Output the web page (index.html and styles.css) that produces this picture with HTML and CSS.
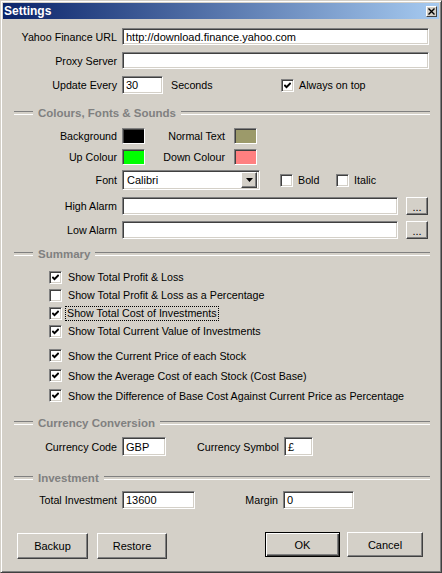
FILE: index.html
```html
<!DOCTYPE html>
<html>
<head>
<meta charset="utf-8">
<title>Settings</title>
<link rel="stylesheet" href="styles.css">
</head>
<body>
<div class="window">
  <div class="titlebar">
    <span class="title">Settings</span>
    <span class="close"><svg width="7" height="7" viewBox="0 0 7 7"><path d="M0.5 0.5 L6.5 6.5 M6.5 0.5 L0.5 6.5" stroke="#000" stroke-width="1.4" fill="none"/></svg></span>
  </div>
  <div class="content">
    <div class="row r-url"><span class="lbl">Yahoo Finance URL</span><div class="field w-url">http://download.finance.yahoo.com</div></div>
    <div class="row r-proxy"><span class="lbl">Proxy Server</span><div class="field w-url"></div></div>
    <div class="row r-update">
      <span class="lbl">Update Every</span><div class="field w-update">30</div>
      <span class="seconds">Seconds</span>
      <span class="check"><span class="cb"><svg width="7" height="7" viewBox="0 0 7 7"><polyline points="0.3,3 2.5,5.2 6.7,1" stroke="#000" stroke-width="2" fill="none"/></svg></span>Always on top</span>
    </div>

    <div class="group-head gh-colours">Colours, Fonts &amp; Sounds</div>
    <div class="row r-bg">
      <span class="lbl">Background</span><span class="swatch sw-black"></span>
      <span class="lbl2">Normal Text</span><span class="swatch sw-olive"></span>
    </div>
    <div class="row r-up">
      <span class="lbl">Up Colour</span><span class="swatch sw-green"></span>
      <span class="lbl2">Down Colour</span><span class="swatch sw-pink"></span>
    </div>
    <div class="row r-font">
      <span class="lbl">Font</span>
      <div class="field select"><span>Calibri</span><span class="dd-btn"><svg width="7" height="4" viewBox="0 0 7 4"><polygon points="0,0 7,0 3.5,4" fill="#000"/></svg></span></div>
      <span class="check c-bold"><span class="cb"></span>Bold</span>
      <span class="check"><span class="cb"></span>Italic</span>
    </div>
    <div class="row r-high"><span class="lbl">High Alarm</span><div class="field w-alarm"></div><span class="btn dots">...</span></div>
    <div class="row r-low"><span class="lbl">Low Alarm</span><div class="field w-alarm"></div><span class="btn dots">...</span></div>

    <div class="group-head gh-summary">Summary</div>
    <div class="chk-group g1">
      <div class="chk-row"><span class="cb"><svg width="7" height="7" viewBox="0 0 7 7"><polyline points="0.3,3 2.5,5.2 6.7,1" stroke="#000" stroke-width="2" fill="none"/></svg></span>Show Total Profit &amp; Loss</div>
      <div class="chk-row"><span class="cb"></span>Show Total Profit &amp; Loss as a Percentage</div>
      <div class="chk-row"><span class="cb"><svg width="7" height="7" viewBox="0 0 7 7"><polyline points="0.3,3 2.5,5.2 6.7,1" stroke="#000" stroke-width="2" fill="none"/></svg></span><span class="focus">Show Total Cost of Investments</span></div>
      <div class="chk-row"><span class="cb"><svg width="7" height="7" viewBox="0 0 7 7"><polyline points="0.3,3 2.5,5.2 6.7,1" stroke="#000" stroke-width="2" fill="none"/></svg></span>Show Total Current Value of Investments</div>
    </div>
    <div class="chk-group g2">
      <div class="chk-row"><span class="cb"><svg width="7" height="7" viewBox="0 0 7 7"><polyline points="0.3,3 2.5,5.2 6.7,1" stroke="#000" stroke-width="2" fill="none"/></svg></span>Show the Current Price of each Stock</div>
      <div class="chk-row"><span class="cb"><svg width="7" height="7" viewBox="0 0 7 7"><polyline points="0.3,3 2.5,5.2 6.7,1" stroke="#000" stroke-width="2" fill="none"/></svg></span>Show the Average Cost of each Stock (Cost Base)</div>
      <div class="chk-row"><span class="cb"><svg width="7" height="7" viewBox="0 0 7 7"><polyline points="0.3,3 2.5,5.2 6.7,1" stroke="#000" stroke-width="2" fill="none"/></svg></span>Show the Difference of Base Cost Against Current Price as Percentage</div>
    </div>

    <div class="group-head gh-currency">Currency Conversion</div>
    <div class="row r-cur">
      <span class="lbl">Currency Code</span><div class="field w-code">GBP</div>
      <span class="lbl2 l-sym">Currency Symbol</span><div class="field w-sym">£</div>
    </div>

    <div class="group-head gh-invest">Investment</div>
    <div class="row r-inv">
      <span class="lbl">Total Investment</span><div class="field w-inv">13600</div>
      <span class="lbl2 l-margin">Margin</span><div class="field w-margin">0</div>
    </div>

    <div class="btn-row">
      <div class="btn-group left">
        <span class="btn b-backup">Backup</span>
        <span class="btn b-restore">Restore</span>
      </div>
      <div class="btn-group right">
        <span class="btn b-ok default">OK</span>
        <span class="btn b-cancel">Cancel</span>
      </div>
    </div>
  </div>
</div>
</body>
</html>
```
FILE: styles.css
```css
* { box-sizing: border-box; }
html, body { margin: 0; padding: 0; }
body {
  background: #d4d0c8;
  font: 10.7px "Liberation Sans", Arial, sans-serif;
  color: #000;
}
.window {
  width: 442px;
  height: 573px;
  background: #d4d0c8;
  border: 1px solid;
  border-color: #d4d0c8 #404040 #404040 #d4d0c8;
  box-shadow: inset 1px 1px #fff, inset -1px -1px #808080;
  padding: 2px;
  display: flex;
  flex-direction: column;
}
.titlebar {
  height: 16px;
  flex-shrink: 0;
  background: linear-gradient(to right, #0a246a, #a6caf0);
  display: flex;
  align-items: center;
  justify-content: space-between;
  padding: 0 2px 0 1px;
}
.title { color: #fff; font-weight: bold; font-size: 12px; }
.close {
  width: 11px; height: 11px;
  background: #d4d0c8;
  border: 1px solid;
  border-color: #fff #404040 #404040 #fff;
  display: flex; align-items: center; justify-content: center;
}
.close svg { display: block; }

.content { display: flex; flex-direction: column; }
.row { display: flex; align-items: center; white-space: nowrap; }
.lbl { width: 114px; text-align: right; margin-right: 5px; flex-shrink: 0; }
.lbl2 { text-align: right; margin-right: 9px; width: 80px; flex-shrink: 0; }

.field {
  background: #fff;
  border: 1px solid;
  border-color: #808080 #fff #fff #808080;
  box-shadow: inset 1px 1px #404040, inset -1px -1px #d4d0c8;
  height: 100%;
  padding: 0 3px;
  display: flex;
  align-items: center;
  white-space: nowrap;
  overflow: hidden;
  flex-shrink: 0;
  font-size: 11px;
}
.w-url { width: 307px; }
.w-update { width: 41px; }
.w-alarm { width: 276px; }
.w-code { width: 44px; }
.w-sym { width: 29px; }
.w-inv { width: 73px; }
.w-margin { width: 71px; }

.r-url { margin-top: 9px; height: 17px; }
.r-proxy { margin-top: 7px; height: 17px; }
.r-update { margin-top: 7px; height: 18px; }
.r-bg { margin-top: 8px; height: 16px; }
.r-up { margin-top: 5px; height: 16px; }
.r-font { margin-top: 5px; height: 20px; }
.r-high { margin-top: 7px; height: 18px; }
.r-low { margin-top: 6px; height: 18px; }
.r-cur { margin-top: 7px; height: 19px; }
.r-inv { margin-top: 6px; height: 18px; }

.seconds { margin-left: 8px; width: 110px; }
.check { display: flex; align-items: center; gap: 5px; }
.c-bold { margin-left: 20px; width: 56px; }

.cb {
  width: 13px; height: 13px;
  background: #fff;
  border: 1px solid;
  border-color: #808080 #fff #fff #808080;
  box-shadow: inset 1px 1px #404040, inset -1px -1px #d4d0c8;
  flex-shrink: 0;
  display: flex; align-items: center; justify-content: center;
}
.cb svg { display: block; }

.swatch {
  width: 23px; height: 16px;
  border: 1px solid;
  border-color: #808080 #fff #fff #808080;
  box-shadow: inset 1px 1px #404040;
  flex-shrink: 0;
}
.r-bg .swatch:first-of-type, .r-up .swatch:first-of-type { margin-left: 4px; }
.sw-black { background: #000; }
.sw-olive { background: #9c9a6a; }
.sw-green { background: #00ff00; }
.sw-pink { background: #ff8080; }

.select { width: 138px; justify-content: space-between; padding: 0 2px 0 4px; }
.dd-btn {
  width: 16px; height: 16px;
  background: #d4d0c8;
  border: 1px solid;
  border-color: #fff #404040 #404040 #fff;
  box-shadow: inset -1px -1px #808080;
  display: flex; align-items: center; justify-content: center;
}
.dd-btn svg { display: block; }

.btn {
  background: #d4d0c8;
  border: 1px solid;
  border-color: #fff #404040 #404040 #fff;
  box-shadow: inset -1px -1px #808080;
  display: flex; align-items: center; justify-content: center;
  flex-shrink: 0;
  font-size: 11px;
}
.dots { width: 22px; height: 18px; margin-left: 8px; align-items: flex-end; padding-bottom: 3px; line-height: 8px; }

.group-head {
  display: flex;
  align-items: center;
  height: 14px;
  margin-left: 11px;
  width: 416px;
  gap: 5px;
  color: #808080;
  font-weight: bold;
  font-size: 11.5px;
  white-space: nowrap;
}
.group-head::before, .group-head::after {
  content: "";
  height: 2px;
  border-top: 1px solid #808080;
  border-bottom: 1px solid #fff;
}
.group-head::before { width: 19px; }
.group-head::after { flex: 1; }
.gh-colours { margin-top: 12px; }
.gh-summary { margin-top: 8px; }
.gh-currency { margin-top: 11px; }
.gh-invest { margin-top: 15px; }

.chk-group { display: flex; flex-direction: column; margin-left: 46px; }
.g1 { margin-top: 7px; }
.g2 { margin-top: 6px; gap: 1px; }
.chk-row { display: flex; align-items: center; gap: 6px; height: 18px; white-space: nowrap; }
.g2 .chk-row { height: 19px; }
.focus { outline: 1px dotted #000; padding: 0 1px; margin-left: -2px; line-height: 13px; }

.l-sym { width: 113px; margin-right: 5px; }
.l-margin { width: 83px; margin-right: 5px; }

.btn-row {
  margin-top: 23px;
  margin-left: 14px;
  width: 406px;
  height: 27px;
  display: flex;
  justify-content: space-between;
  align-items: flex-start;
}
.btn-group { display: flex; }
.btn-group.left { gap: 9px; margin-top: 1px; }
.btn-group.right { gap: 7px; }
.b-backup { width: 71px; height: 26px; }
.b-restore { width: 70px; height: 26px; }
.b-ok { width: 75px; height: 25px; }
.b-cancel { width: 76px; height: 25px; }
.btn.default {
  border: 1px solid #000;
  box-shadow: inset 1px 1px #fff, inset -1px -1px #404040, inset -2px -2px #808080;
}
```
